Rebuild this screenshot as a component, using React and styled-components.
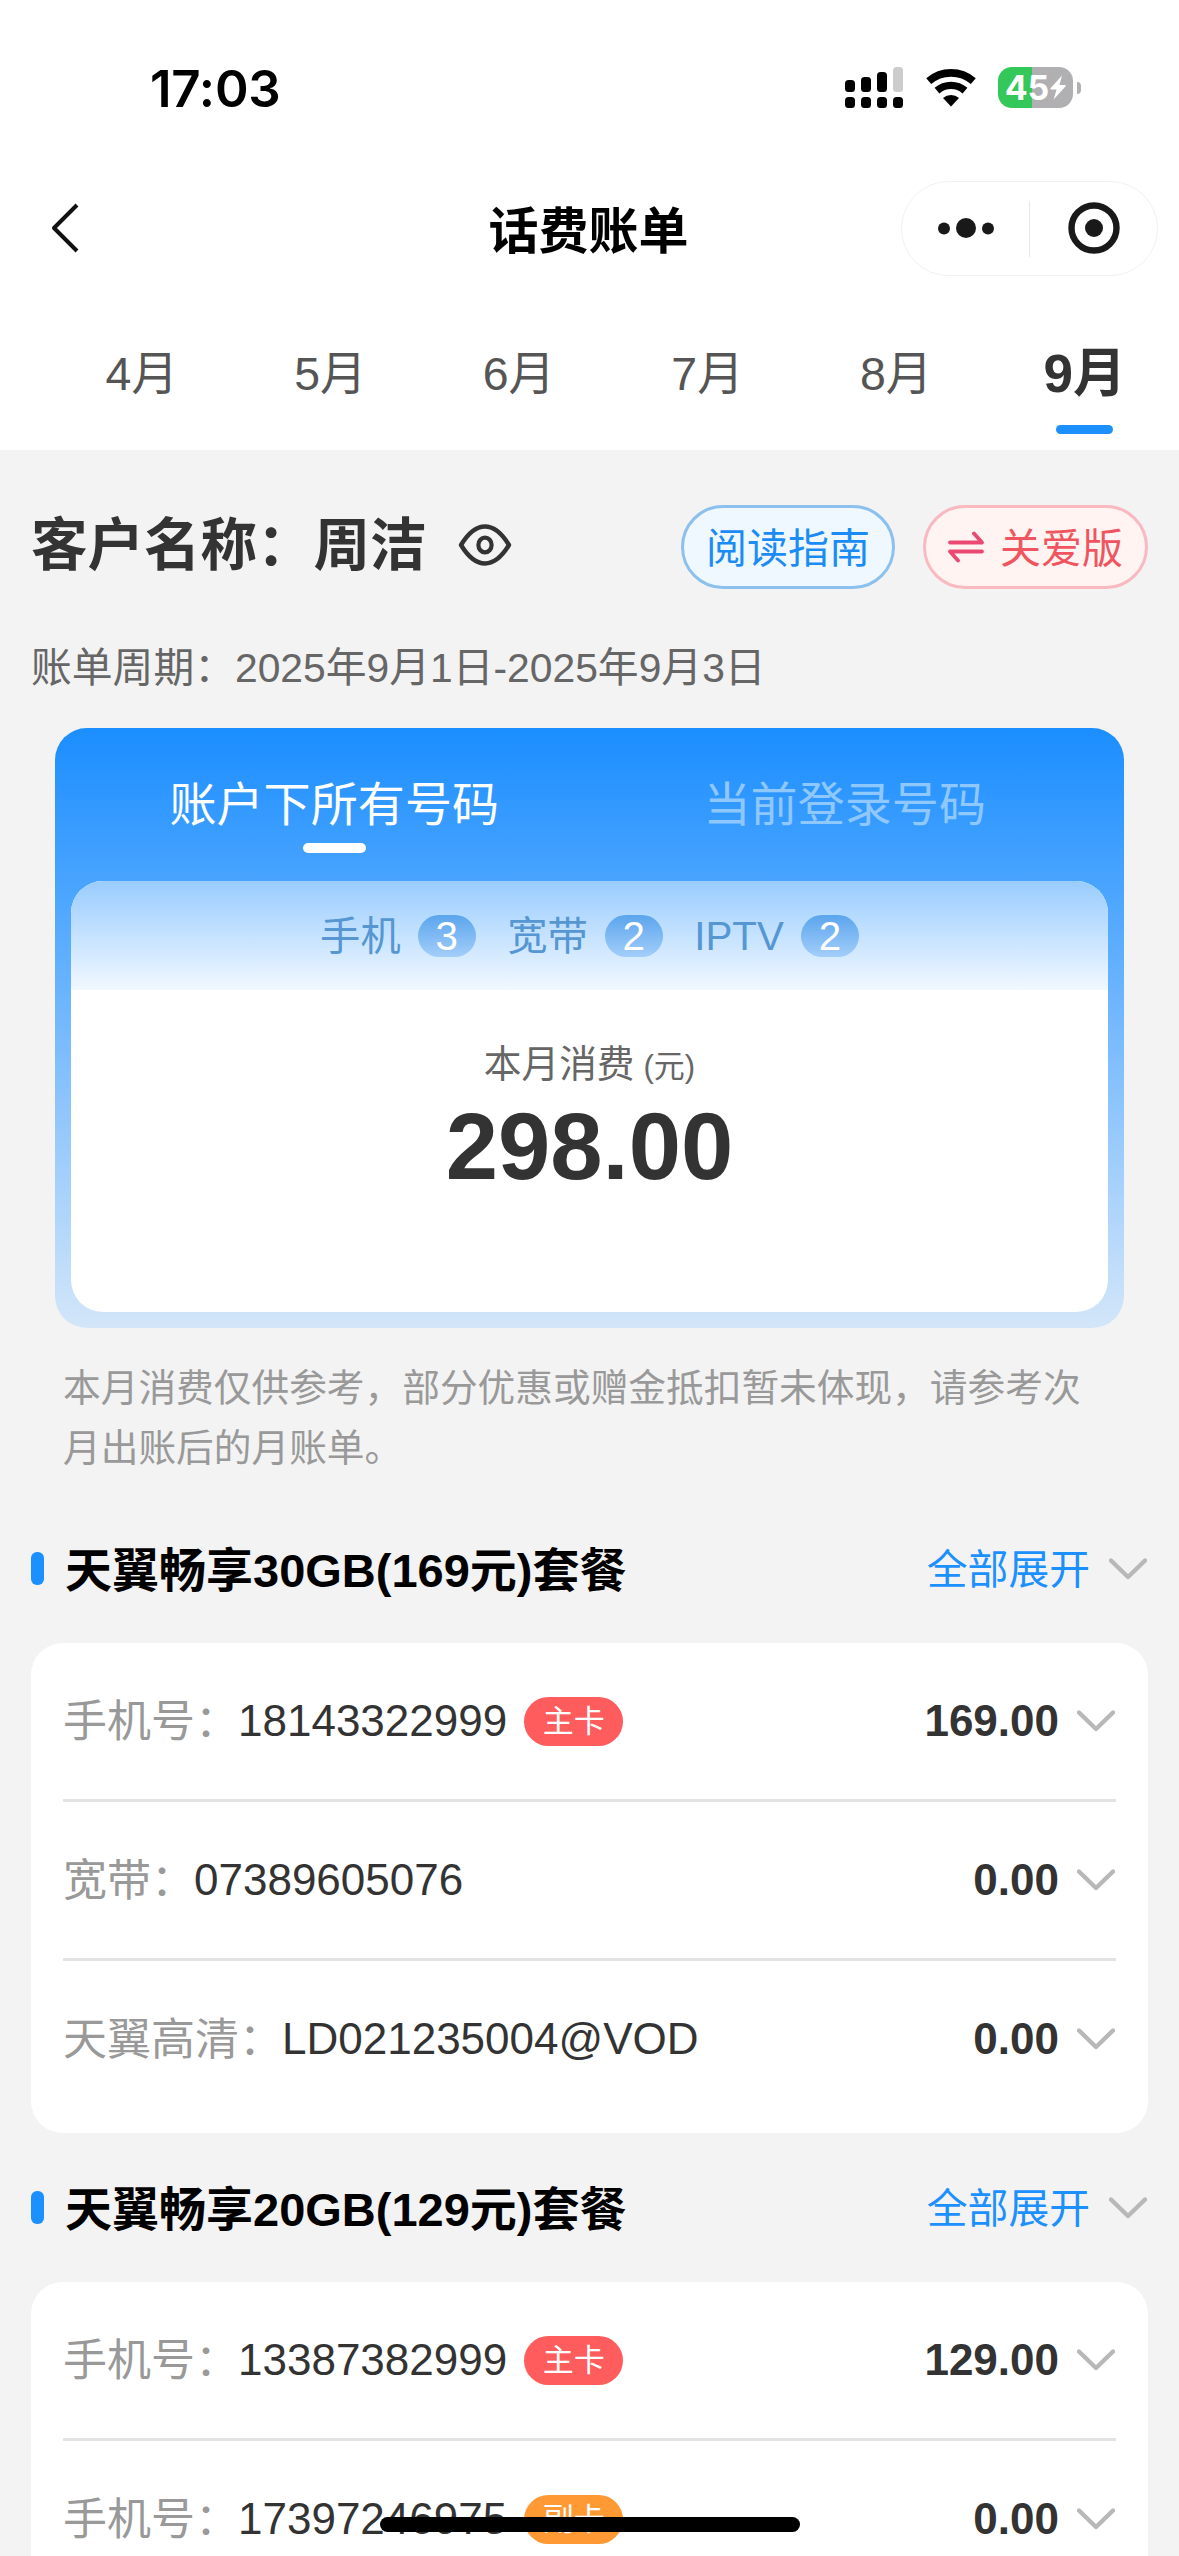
import React, { useState } from "react";
import styled, { createGlobalStyle } from "styled-components";

const GlobalStyle = createGlobalStyle`
  * {
    box-sizing: border-box;
  }

  body {
    margin: 0;
    background: #f3f3f3;
    font-family: "Liberation Sans", "Noto Sans CJK SC", sans-serif;
  }

  button {
    padding: 0;
    border: none;
    background: transparent;
    font-family: inherit;
    cursor: pointer;
  }

  svg {
    display: block;
    flex-shrink: 0;
  }
`;

const Page = styled.div`
  position: relative;
  width: 1179px;
  height: 2556px;
  overflow: hidden;
  background: #f3f3f3;
  color: #333333;
  white-space: nowrap;
`;

// top white area
const Header = styled.header`
  height: 450px;
  background: #ffffff;
`;

const StatusBar = styled.div`
  display: flex;
  justify-content: space-between;
  height: 181px;
  padding: 67px 98px 0 150px;
`;

const Time = styled.div`
  height: 42px;
  line-height: 43px;
  font-family: "Inter", sans-serif;
  font-size: 51px;
  font-weight: 600;
  letter-spacing: -0.2px;
  color: #000000;
`;

const StatusIcons = styled.div`
  display: flex;
  align-items: flex-start;
  height: 41px;
`;

const WifiIcon = styled.svg`
  margin: 1px 22px 0 23px;
`;

const Battery = styled.div`
  display: flex;
  align-items: center;
  justify-content: center;
  gap: 1px;
  width: 75px;
  height: 41px;
  border-radius: 14px;
  background: linear-gradient(
    to right,
    #34c759 ${(props) => props.$level}%,
    #b0b0b2 ${(props) => props.$level}%
  );
  font-family: "Inter", sans-serif;
  font-size: 34px;
  font-weight: 700;
  letter-spacing: -0.2px;
  color: #ffffff;
`;

const BatteryTip = styled.div`
  width: 4px;
  height: 12px;
  margin: 15px 0 0 4px;
  border-radius: 0 4px 4px 0;
  background: #b0b0b2;
`;

const NavBar = styled.div`
  display: grid;
  grid-template-columns: 1fr auto 1fr;
  grid-template-rows: 95px;
  align-items: center;
  height: 95px;
  padding: 0 21px 0 50px;
`;

const Title = styled.h1`
  margin: 6px 31px 0 0;
  font-size: 50px;
  font-weight: 700;
  line-height: 80px;
  color: #000000;
`;

const Capsule = styled.div`
  display: flex;
  align-items: center;
  justify-self: end;
  width: 257px;
  height: 95px;
  border: 1px solid #f1f1f1;
  border-radius: 48px;
`;

const CapsuleButton = styled.button`
  display: flex;
  flex: 1;
  align-items: center;
  justify-content: center;
  padding-bottom: 2px;
`;

const CapsuleDivider = styled.div`
  width: 1px;
  height: 56px;
  background: #e8e8e8;
`;

const MonthTabs = styled.div`
  display: flex;
  justify-content: flex-end;
  height: 174px;
  padding-top: 57px;
`;

const MonthTab = styled.button`
  display: flex;
  flex-direction: column;
  align-items: center;
  width: 188.6px;
  font-size: ${(props) => (props.$active ? "53px" : "46.5px")};
  font-weight: ${(props) => (props.$active ? 700 : 400)};
  line-height: 82px;
  color: ${(props) => (props.$active ? "#333333" : "#555555")};

  &::after {
    content: "";
    width: 57px;
    height: 9px;
    margin-top: 10px;
    border-radius: 5px;
    background: ${(props) => (props.$active ? "#1c90ff" : "transparent")};
  }
`;

// customer info
const Customer = styled.section`
  display: flex;
  align-items: center;
  height: 83px;
  margin-top: 55px;
  padding: 0 31px;
`;

const CustomerName = styled.h2`
  margin: -2px 31px 0 0;
  font-size: 56.5px;
  font-weight: 700;
  line-height: 83px;
`;

const EyeButton = styled.button`
  margin-bottom: 4px;
`;

const PillButton = styled.button`
  display: flex;
  align-items: center;
  justify-content: center;
  gap: 16px;
  width: ${(props) => props.$width}px;
  height: 84px;
  margin-left: ${(props) => (props.$first ? "auto" : "28px")};
  border: 3px solid ${(props) => props.$border};
  border-radius: 42px;
  background: ${(props) => props.$background};
  font-size: 41px;
  line-height: 77px;
  color: ${(props) => props.$color};
`;

const PillText = styled.span`
  padding-top: 5px;
`;

const Period = styled.p`
  height: 80px;
  margin: 41px 0 0;
  padding-left: 31px;
  font-size: 40.8px;
  line-height: 78px;
  color: #666666;
`;

// summary card
const Summary = styled.section`
  display: flex;
  flex-direction: column;
  width: 1069px;
  height: 600px;
  margin: 19px 0 0 55px;
  padding: 0 16px 16px;
  border-radius: 32px;
  background: linear-gradient(to bottom, #1b8eff 0%, #47a3ff 25%, #d3e6f9 100%);
`;

const SummaryTabs = styled.div`
  display: flex;
  height: 153px;
  padding: 37px 8px 0;
`;

const SummaryTab = styled.button`
  display: flex;
  flex: 1;
  flex-direction: column;
  align-items: center;
  font-size: 47.1px;
  line-height: 80px;
  color: ${(props) => (props.$active ? "#ffffff" : "#8fc7ff")};

  &::after {
    content: "";
    width: 63px;
    height: 10px;
    margin-top: -2px;
    border-radius: 5px;
    background: ${(props) => (props.$active ? "#ffffff" : "transparent")};
  }
`;

const SummaryBody = styled.div`
  flex: 1;
  overflow: hidden;
  border-radius: 32px;
  background: #ffffff;
`;

const Counts = styled.div`
  display: flex;
  align-items: center;
  justify-content: center;
  gap: 31.5px;
  height: 109px;
  background: linear-gradient(to bottom, #99ccff, #f1f8ff);
`;

const Count = styled.div`
  display: flex;
  align-items: center;
  gap: 17px;
  font-size: 40.3px;
  line-height: 60px;
  color: #5596d3;
`;

const CountName = styled.span`
  padding-top: 2px;
`;

const CountBadge = styled.span`
  width: 58px;
  height: 42px;
  border-radius: 21px;
  background: linear-gradient(to bottom, #5ba5ed, #a3cefa);
  line-height: 44px;
  text-align: center;
  color: #ffffff;
`;

const TotalLabel = styled.div`
  display: flex;
  align-items: baseline;
  justify-content: center;
  gap: 9px;
  margin-top: 44px;
  font-size: 37.7px;
  line-height: 60px;
  color: #666666;

  small {
    font-size: 31px;
  }
`;

const Total = styled.div`
  margin-top: -4px;
  font-size: 94px;
  font-weight: 700;
  line-height: 108px;
  text-align: center;
`;

const Note = styled.p`
  width: 1030px;
  margin: 30px 0 0 63px;
  font-size: 37.7px;
  line-height: 60px;
  white-space: normal;
  color: #999999;
`;

// package groups
const Groups = styled.div`
  margin-top: 16px;
`;

const GroupHeader = styled.div`
  display: flex;
  align-items: center;
  height: 149px;
  padding: 0 32px 0 31px;

  &::before {
    content: "";
    width: 13px;
    height: 33px;
    margin-right: 21px;
    border-radius: 6px;
    background: #1c90ff;
  }
`;

const GroupTitle = styled.h3`
  margin: 0;
  padding-bottom: 5px;
  font-size: 47px;
  font-weight: 700;
  color: #000000;
`;

const ExpandAll = styled.button`
  display: flex;
  align-items: center;
  gap: 19px;
  margin-left: auto;
  font-size: 40.8px;
  color: #1c90ff;

  span {
    padding-bottom: 5px;
  }
`;

const GroupCard = styled.div`
  margin: 0 31px;
  padding: 0 32px 16px;
  border-radius: 32px;
  background: #ffffff;
`;

const Row = styled.div`
  display: flex;
  align-items: center;
  height: 159px;
  border-bottom: 3px solid #e3e3e3;
  font-size: 44px;

  &:last-child {
    height: 156px;
    border-bottom: none;
  }
`;

const RowLabel = styled.span`
  padding-bottom: 6px;
  color: #999999;
`;

const RowNumber = styled.span`
  margin-left: -1px;
`;

const Tag = styled.span`
  width: 99px;
  height: 49px;
  margin-left: 17px;
  border-radius: 25px;
  background: ${(props) => (props.$secondary ? "#ff9933" : "#ff5c5e")};
  font-size: 31px;
  line-height: 50px;
  text-align: center;
  color: #ffffff;
`;

const Amount = styled.span`
  margin: 0 18px 0 auto;
  font-weight: 700;
`;

const RowChevron = styled.span`
  margin-right: 1px;
`;

const HomeIndicator = styled.div`
  position: absolute;
  left: 380px;
  bottom: 24px;
  width: 420px;
  height: 15px;
  border-radius: 8px;
  background: #000000;
`;

const SignalIcon = () => (
  <svg width="58" height="41" viewBox="0 0 58 41" fill="#000000">
    <rect x="0" y="13" width="10" height="12" rx="3.5" />
    <rect x="16" y="10" width="10" height="15" rx="3.5" />
    <rect x="32" y="5" width="10" height="20" rx="3.5" />
    <rect x="48" y="0" width="10" height="25" rx="3.5" fill="#cccccc" />
    <rect x="0" y="30" width="10" height="11" rx="3.5" />
    <rect x="16" y="30" width="10" height="11" rx="3.5" />
    <rect x="32" y="30" width="10" height="11" rx="3.5" />
    <rect x="48" y="30" width="10" height="11" rx="3.5" />
  </svg>
);

const Wifi = () => (
  <WifiIcon width="50" height="39" viewBox="0 0 50 39" fill="none">
    <path d="M2.7 13.2A34 34 0 0 1 47.3 13.2" stroke="#000" strokeWidth="7.6" />
    <path d="M11 22.6A21.5 21.5 0 0 1 39 22.6" stroke="#000" strokeWidth="7.4" />
    <path d="M17 30A12.5 12.5 0 0 1 33 30L25 38.5Z" fill="#000" />
  </WifiIcon>
);

const Bolt = () => (
  <svg width="16" height="25" viewBox="0 0 16 25" fill="#ffffff">
    <path d="M12 0.5L0.5 13.2Q0 14.3 1 14.4H6.6L3.6 24.5L15.6 11.2Q16 10.2 15 10.1H9.4Z" />
  </svg>
);

const BackIcon = () => (
  <svg width="30" height="52" viewBox="0 0 30 52" fill="none">
    <path
      d="M27 2L4 25L27 48"
      stroke="#111111"
      strokeWidth="4"
      strokeLinejoin="round"
    />
  </svg>
);

const MoreIcon = () => (
  <svg width="56" height="20" viewBox="0 0 56 20" fill="#191919">
    <circle cx="6" cy="10.5" r="6" />
    <circle cx="28" cy="10" r="10" />
    <circle cx="50" cy="10.5" r="6" />
  </svg>
);

const CloseIcon = () => (
  <svg width="52" height="52" viewBox="0 0 52 52" fill="none">
    <circle cx="26" cy="26" r="22.5" stroke="#191919" strokeWidth="6.4" />
    <circle cx="26" cy="26" r="9" fill="#191919" />
  </svg>
);

const EyeIcon = () => (
  <svg width="54" height="42" viewBox="0 0 54 42" fill="none" stroke="#333333">
    <path
      d="M3 21C10 9.5 18 2.5 27 2.5S44 9.5 51 21C44 32.5 36 39.5 27 39.5S10 32.5 3 21Z"
      strokeWidth="4.4"
      strokeLinejoin="round"
    />
    <ellipse cx="27" cy="21" rx="6.6" ry="7.4" strokeWidth="4.2" />
  </svg>
);

const SwitchIcon = () => (
  <svg
    width="36"
    height="32"
    viewBox="0 0 36 32"
    fill="none"
    stroke="#ea4a72"
    strokeWidth="3.8"
    strokeLinecap="round"
    strokeLinejoin="round"
  >
    <path d="M2 11.5H34L26 2.5" />
    <path d="M34 20.5H2L10 29.5" />
  </svg>
);

const ChevronIcon = () => (
  <svg width="38" height="22" viewBox="0 0 38 22" fill="none">
    <path
      d="M2 2.5L19 19L36 2.5"
      stroke="#b8b8b8"
      strokeWidth="4.4"
      strokeLinecap="round"
      strokeLinejoin="round"
    />
  </svg>
);

const months = ["4月", "5月", "6月", "7月", "8月", "9月"];

const summaryTabs = ["账户下所有号码", "当前登录号码"];

const counts = [
  { name: "手机", count: 3 },
  { name: "宽带", count: 2 },
  { name: "IPTV", count: 2 },
];

const groups = [
  {
    title: "天翼畅享30GB(169元)套餐",
    rows: [
      { label: "手机号：", number: "18143322999", tag: "主卡", amount: "169.00" },
      { label: "宽带：", number: "07389605076", amount: "0.00" },
      { label: "天翼高清：", number: "LD021235004@VOD", amount: "0.00" },
    ],
  },
  {
    title: "天翼畅享20GB(129元)套餐",
    rows: [
      { label: "手机号：", number: "13387382999", tag: "主卡", amount: "129.00" },
      { label: "手机号：", number: "17397246975", tag: "副卡", amount: "0.00" },
    ],
  },
];

const Group = ({ title, rows }) => (
  <>
    <GroupHeader>
      <GroupTitle>{title}</GroupTitle>
      <ExpandAll>
        <span>全部展开</span>
        <ChevronIcon />
      </ExpandAll>
    </GroupHeader>
    <GroupCard>
      {rows.map((row) => (
        <Row key={row.number}>
          <RowLabel>{row.label}</RowLabel>
          <RowNumber>{row.number}</RowNumber>
          {row.tag && <Tag $secondary={row.tag === "副卡"}>{row.tag}</Tag>}
          <Amount>{row.amount}</Amount>
          <RowChevron>
            <ChevronIcon />
          </RowChevron>
        </Row>
      ))}
    </GroupCard>
  </>
);

const App = () => {
  const [month, setMonth] = useState("9月");
  const [tab, setTab] = useState(summaryTabs[0]);

  return (
    <Page>
      <GlobalStyle />
      <Header>
        <StatusBar>
          <Time>17:03</Time>
          <StatusIcons>
            <SignalIcon />
            <Wifi />
            <Battery $level={46}>
              45
              <Bolt />
            </Battery>
            <BatteryTip />
          </StatusIcons>
        </StatusBar>
        <NavBar>
          <BackIcon />
          <Title>话费账单</Title>
          <Capsule>
            <CapsuleButton>
              <MoreIcon />
            </CapsuleButton>
            <CapsuleDivider />
            <CapsuleButton>
              <CloseIcon />
            </CapsuleButton>
          </Capsule>
        </NavBar>
        <MonthTabs>
          {months.map((item) => (
            <MonthTab
              key={item}
              $active={item === month}
              onClick={() => setMonth(item)}
            >
              {item}
            </MonthTab>
          ))}
        </MonthTabs>
      </Header>

      <Customer>
        <CustomerName>客户名称：周洁</CustomerName>
        <EyeButton>
          <EyeIcon />
        </EyeButton>
        <PillButton
          $first
          $width={214}
          $border="#8cc0ee"
          $background="#f0f8ff"
          $color="#1c8cf5"
        >
          <PillText>阅读指南</PillText>
        </PillButton>
        <PillButton
          $width={225}
          $border="#f9b9c0"
          $background="#fff4f2"
          $color="#f0555f"
        >
          <SwitchIcon />
          <PillText>关爱版</PillText>
        </PillButton>
      </Customer>
      <Period>账单周期：2025年9月1日-2025年9月3日</Period>

      <Summary>
        <SummaryTabs>
          {summaryTabs.map((item) => (
            <SummaryTab
              key={item}
              $active={item === tab}
              onClick={() => setTab(item)}
            >
              {item}
            </SummaryTab>
          ))}
        </SummaryTabs>
        <SummaryBody>
          <Counts>
            {counts.map((item) => (
              <Count key={item.name}>
                <CountName>{item.name}</CountName>
                <CountBadge>{item.count}</CountBadge>
              </Count>
            ))}
          </Counts>
          <TotalLabel>
            本月消费<small>(元)</small>
          </TotalLabel>
          <Total>298.00</Total>
        </SummaryBody>
      </Summary>
      <Note>
        本月消费仅供参考，部分优惠或赠金抵扣暂未体现，请参考次月出账后的月账单。
      </Note>

      <Groups>
        {groups.map((group) => (
          <Group key={group.title} {...group} />
        ))}
      </Groups>
      <HomeIndicator />
    </Page>
  );
};

export default App;
